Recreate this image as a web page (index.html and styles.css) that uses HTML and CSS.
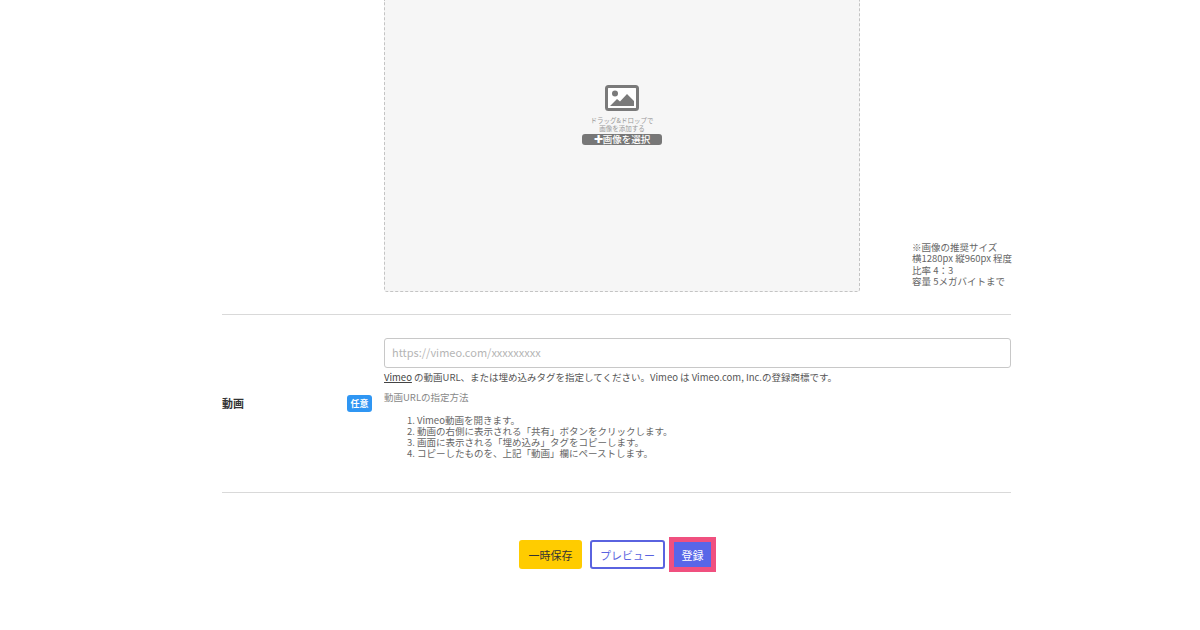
FILE: index.html
```html
<!DOCTYPE html>
<html lang="ja">
<head>
  <meta charset="UTF-8">
  <meta name="viewport" content="width=device-width, initial-scale=1.0">
  <title>動画登録</title>
  <link rel="stylesheet" href="styles.css">
</head>
<body>
  <form class="form">
    <div class="row row-image">
      <div class="dropzone">
        <svg class="dropzone-icon" width="34" height="26" viewBox="0 0 34 26">
          <rect x="1.5" y="1.5" width="31" height="23" rx="2" fill="#fff" stroke="#7a7a7a" stroke-width="3"/>
          <circle cx="10" cy="8.5" r="3" fill="#7a7a7a"/>
          <path d="M5 21 L12 14 L15 16.5 L22 9 L29 16 V21 Z" fill="#7a7a7a"/>
        </svg>
        <p class="dropzone-text">ドラッグ&amp;ドロップで<br>画像を添加する</p>
        <span class="dropzone-btn"><span class="plus">✚</span>画像を選択</span>
      </div>
      <p class="image-note">※画像の推奨サイズ<br>横1280px 縦960px 程度<br>比率 4：3<br>容量 5メガバイトまで</p>
    </div>

    <div class="row row-video">
      <div class="label">
        <span>動画</span>
        <span class="badge">任意</span>
      </div>
      <div class="field">
        <input class="text-input" type="text" placeholder="https://vimeo.com/xxxxxxxxx">
        <p class="help"><a href="#">Vimeo</a> の動画URL、または埋め込みタグを指定してください。Vimeo は Vimeo.com, Inc.の登録商標です。</p>
        <p class="howto-title">動画URLの指定方法</p>
        <ol class="howto">
          <li>Vimeo動画を開きます。</li>
          <li>動画の右側に表示される「共有」ボタンをクリックします。</li>
          <li>画面に表示される「埋め込み」タグをコピーします。</li>
          <li>コピーしたものを、上記「動画」欄にペーストします。</li>
        </ol>
      </div>
    </div>

    <div class="actions">
      <button type="button" class="btn btn-save">一時保存</button>
      <button type="button" class="btn btn-preview">プレビュー</button>
      <span class="highlight"><button type="button" class="btn btn-submit">登録</button></span>
    </div>
  </form>
</body>
</html>
```

FILE: styles.css
```css
body {
  margin: 0;
  background: #fff;
  color: #333;
  font-family: "Noto Sans CJK JP", "Noto Sans", sans-serif;
  font-size: 10px;
  height: 630px;
  overflow: hidden;
}
.form {
  width: 789px;
  margin-left: 222px;
}
.row-image {
  display: flex;
  align-items: flex-end;
  height: 315px;
  box-sizing: border-box;
  padding: 0 0 22px 162px;
  border-bottom: 1px solid #d9d9d9;
}
.dropzone {
  flex: none;
  width: 476px;
  height: 292px;
  box-sizing: border-box;
  border: 1px dashed #c4c4c4;
  border-top: 0;
  border-radius: 0 0 3px 3px;
  background: #f6f6f6;
  display: flex;
  flex-direction: column;
  align-items: center;
  padding-top: 85px;
}
.dropzone-icon {
  display: block;
}
.dropzone-text {
  margin: 5px 0 0;
  font-size: 6.5px;
  line-height: 8px;
  color: #999;
  text-align: center;
}
.dropzone-btn {
  margin-top: 2px;
  width: 80px;
  height: 11px;
  border-radius: 3px;
  background: #777;
  color: #fff;
  font-size: 9.5px;
  font-weight: 500;
  line-height: 11px;
  text-align: center;
}
.plus {
  font-family: "DejaVu Sans", sans-serif;
  font-size: 11px;
}
.image-note {
  margin: 0 0 4.5px 52px;
  font-size: 9.5px;
  line-height: 11.5px;
  color: #666;
  white-space: nowrap;
}
.row-video {
  display: flex;
  align-items: center;
  height: 178px;
  box-sizing: border-box;
  border-bottom: 1px solid #d9d9d9;
}
.label {
  width: 150px;
  margin-right: 12px;
  margin-bottom: 1px;
  display: flex;
  justify-content: space-between;
  align-items: center;
  font-size: 11px;
  font-weight: 700;
  color: #333;
}
.badge {
  width: 25px;
  height: 17px;
  border-radius: 3px;
  background: #2f96f3;
  color: #fff;
  font-size: 9px;
  font-weight: 700;
  line-height: 17px;
  text-align: center;
}
.field {
  width: 627px;
  align-self: flex-start;
  padding-top: 23px;
}
.text-input {
  display: block;
  width: 100%;
  height: 30px;
  box-sizing: border-box;
  padding: 0 7px 2px;
  border: 1px solid #c8c8c8;
  border-radius: 3px;
  font-family: inherit;
  font-size: 11px;
}
.text-input::placeholder {
  color: #b5b5b5;
}
.help {
  margin: 2px 0 0;
  font-size: 9.5px;
  line-height: 15px;
  color: #555;
}
.help a {
  color: #444;
}
.howto-title {
  margin: 5px 0 0;
  font-size: 9.5px;
  line-height: 15px;
  color: #888;
}
.howto {
  margin: 10px 0 0;
  padding-left: 33px;
  font-size: 9.5px;
  line-height: 11px;
  color: #666;
}
.actions {
  display: flex;
  justify-content: center;
  align-items: center;
  margin-top: 44px;
  padding-left: 2px;
}
.btn {
  height: 29px;
  box-sizing: border-box;
  border-radius: 3px;
  border: 0;
  font-family: inherit;
  font-size: 11px;
  padding: 0;
}
.btn-save {
  width: 63px;
  background: #ffcc00;
  color: #333;
}
.btn-preview {
  width: 75px;
  margin: 0 4px 0 8px;
  background: #fff;
  border: 2px solid #5a63e0;
  color: #5a63e0;
}
.highlight {
  display: block;
  padding: 5px;
  background: #f0507f;
}
.btn-submit {
  display: block;
  width: 37px;
  height: 25px;
  border-radius: 0;
  background: #5866e8;
  color: #fff;
}
```
